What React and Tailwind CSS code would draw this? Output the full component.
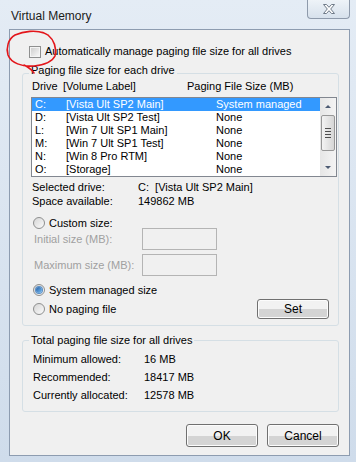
import React from "react";

const drives = [
  { d: "C:", label: "[Vista Ult SP2 Main]", size: "System managed", selected: true },
  { d: "D:", label: "[Vista Ult SP2 Test]", size: "None" },
  { d: "L:", label: "[Win 7 Ult SP1 Main]", size: "None" },
  { d: "M:", label: "[Win 7 Ult SP1 Test]", size: "None" },
  { d: "N:", label: "[Win 8 Pro RTM]", size: "None" },
  { d: "O:", label: "[Storage]", size: "None" },
];

function Radio({ checked }) {
  return (
    <span className="flex h-[12px] w-[12px] items-center justify-center rounded-full border border-[#8e8f8f] bg-gradient-to-br from-[#d6d6d6] to-[#fbfbfb]">
      {checked && (
        <span className="h-[6px] w-[6px] rounded-full bg-gradient-to-br from-[#1f5fa8] to-[#7fc0f2] shadow-[0_0_0_1px_#5a8fc6]" />
      )}
    </span>
  );
}

function Button({ children, className }) {
  return (
    <div
      className={
        "flex items-center justify-center rounded-[3px] border border-[#707070] bg-gradient-to-b from-[#f2f2f2] from-50% to-[#d4d4d4] to-50% text-[12px] shadow-[inset_0_0_0_1px_#fcfcfc] " +
        className
      }
    >
      {children}
    </div>
  );
}

function GroupLabel({ children }) {
  return (
    <div className="ml-[6px] w-fit bg-[#f0f0f0] px-[2px] leading-[14px]">{children}</div>
  );
}

function App() {
  return (
    <div
      className="relative h-[462px] w-[356px] overflow-hidden whitespace-nowrap bg-gradient-to-b from-[#e4ecf5] to-[#cfdceb] text-[11px] text-black"
      style={{ fontFamily: '"Liberation Sans", Arial, sans-serif' }}
    >
      {/* Title bar */}
      <div className="flex h-[29px] items-start justify-between">
        <div className="pl-[11px] pt-[8px] text-[12px] leading-[16px] text-[#1b1b1b]">Virtual Memory</div>
        <div className="mr-[6px] flex h-[19px] w-[43px] items-center justify-center rounded-b-[4px] border border-t-0 border-[#8e9aab] bg-gradient-to-b from-[#eef3f8] to-[#d7e1ec]">
          <svg width="14" height="12" viewBox="0 0 14 12">
            <path
              d="M1.5 1.5 H4.5 L7 4.3 L9.5 1.5 H12.5 L8.7 6 L12.5 10.5 H9.5 L7 7.7 L4.5 10.5 H1.5 L5.3 6 Z"
              fill="#ffffff"
              stroke="#6f7a88"
              strokeWidth="1"
              strokeLinejoin="round"
            />
          </svg>
        </div>
      </div>

      {/* Client area */}
      <div className="ml-[9px] h-[427px] w-[341px] border border-[#8d9cb0] bg-[#f0f0f0]">
        {/* Auto manage */}
        <div className="ml-[19px] mt-[15px] flex h-[13px] items-center gap-[4px]">
          <span className="flex h-[12px] w-[12px] items-center justify-center border border-[#8e8f8f] bg-[#f4f4f4]">
            <span className="h-[8px] w-[8px] bg-gradient-to-br from-[#cfcfcf] to-[#f6f6f6]" />
          </span>
          <span className="leading-[13px]">Automatically manage paging file size for all drives</span>
        </div>

        {/* Paging file size for each drive */}
        <div className="ml-[12px] mt-[15px] h-[253px] w-[317px] rounded-[3px] border border-[#d5dfe5]">
          <div className="-mt-[11px]">
            <GroupLabel>Paging file size for each drive</GroupLabel>
          </div>
          <div className="mt-[2px] flex pl-[9px] leading-[14px]">
            <span className="w-[31px]">Drive</span>
            <span className="w-[124px]">[Volume Label]</span>
            <span>Paging File Size (MB)</span>
          </div>

          <div className="ml-[8px] mt-[4px] flex h-[80px] w-[306px] border border-[#828790] bg-white">
            <div className="flex-1">
              {drives.map((r) => (
                <div
                  key={r.d}
                  className={
                    "flex h-[13px] items-center pl-[3px] leading-[13px] " +
                    (r.selected ? "bg-[#3399ff] text-white" : "")
                  }
                >
                  <span className="w-[31px]">{r.d}</span>
                  <span className="w-[150px]">{r.label}</span>
                  <span>{r.size}</span>
                </div>
              ))}
            </div>
            <div className="flex w-[16px] flex-col items-center bg-gradient-to-r from-[#e6e6e6] to-[#f4f4f4]">
              <svg width="16" height="17" viewBox="0 0 16 17">
                <path d="M5 10 L8 7 L11 10 Z" fill="#4d5b73" />
              </svg>
              <div className="flex h-[36px] w-[14px] flex-col items-center justify-center gap-[2px] rounded-[2px] border border-[#979797] bg-gradient-to-r from-[#f3f3f3] to-[#d6d6d6]">
                <span className="h-px w-[6px] bg-[#4f4f4f]" />
                <span className="h-px w-[6px] bg-[#4f4f4f]" />
                <span className="h-px w-[6px] bg-[#4f4f4f]" />
                <span className="h-px w-[6px] bg-[#4f4f4f]" />
              </div>
              <div className="flex-1" />
              <svg width="16" height="17" viewBox="0 0 16 17">
                <path d="M5 7 L11 7 L8 10 Z" fill="#4d5b73" />
              </svg>
            </div>
          </div>

          <div className="mt-[3px] pl-[9px] leading-[14px]">
            <div className="flex">
              <span className="w-[106px]">Selected drive:</span>
              <span>C:&nbsp;&nbsp;[Vista Ult SP2 Main]</span>
            </div>
            <div className="flex">
              <span className="w-[106px]">Space available:</span>
              <span>149862 MB</span>
            </div>
          </div>

          <div className="ml-[10px] mt-[9px] flex h-[12px] items-center gap-[4px]">
            <Radio />
            <span className="leading-[14px]">Custom size:</span>
          </div>

          <div className="-mt-px pl-[11px] text-[#a0a0a0]">
            <div className="flex items-center">
              <span className="w-[108px]">Initial size (MB):</span>
              <span className="h-[22px] w-[75px] border border-[#b4b4b4] bg-[#f0f0f0]" />
            </div>
            <div className="mt-[4px] flex items-center">
              <span className="w-[108px]">Maximum size (MB):</span>
              <span className="h-[22px] w-[75px] border border-[#b4b4b4] bg-[#f0f0f0]" />
            </div>
          </div>

          <div className="ml-[10px] mt-[8px] flex h-[12px] items-center gap-[4px]">
            <Radio checked />
            <span className="leading-[14px]">System managed size</span>
          </div>

          <div className="ml-[10px] mr-[9px] mt-[3px] flex h-[20px] items-center justify-between">
            <div className="flex items-center gap-[4px]">
              <Radio />
              <span className="leading-[14px]">No paging file</span>
            </div>
            <Button className="h-[20px] w-[72px]">Set</Button>
          </div>
        </div>

        {/* Totals */}
        <div className="ml-[12px] mt-[14px] h-[72px] w-[317px] rounded-[3px] border border-[#d5dfe5]">
          <div className="-mt-[8px]">
            <GroupLabel>Total paging file size for all drives</GroupLabel>
          </div>
          <div className="mt-[3px] pl-[10px] leading-[18px]">
            <div className="flex">
              <span className="w-[111px]">Minimum allowed:</span>
              <span>16 MB</span>
            </div>
            <div className="flex">
              <span className="w-[111px]">Recommended:</span>
              <span>18417 MB</span>
            </div>
            <div className="flex">
              <span className="w-[111px]">Currently allocated:</span>
              <span>12578 MB</span>
            </div>
          </div>
        </div>

        <div className="mr-[10px] mt-[12px] flex justify-end gap-[9px]">
          <Button className="h-[23px] w-[72px]">OK</Button>
          <Button className="h-[23px] w-[72px]">Cancel</Button>
        </div>
      </div>

      {/* red hand-drawn circle annotation */}
      <svg className="pointer-events-none absolute left-0 top-0" width="70" height="80" viewBox="0 0 70 80">
        <path
          d="M44 33 C36 30 24 31 15 35 C8 39 6 48 8 55 C11 63 22 67 34 66 C44 65 52 62 55 56 C57 48 54 40 48 35 C46 34 43 32 40 32 M24 65 C28 67 32 70 34 73"
          fill="none"
          stroke="#e3161b"
          strokeWidth="1.6"
          strokeLinecap="round"
        />
      </svg>
    </div>
  );
}

export default App;
